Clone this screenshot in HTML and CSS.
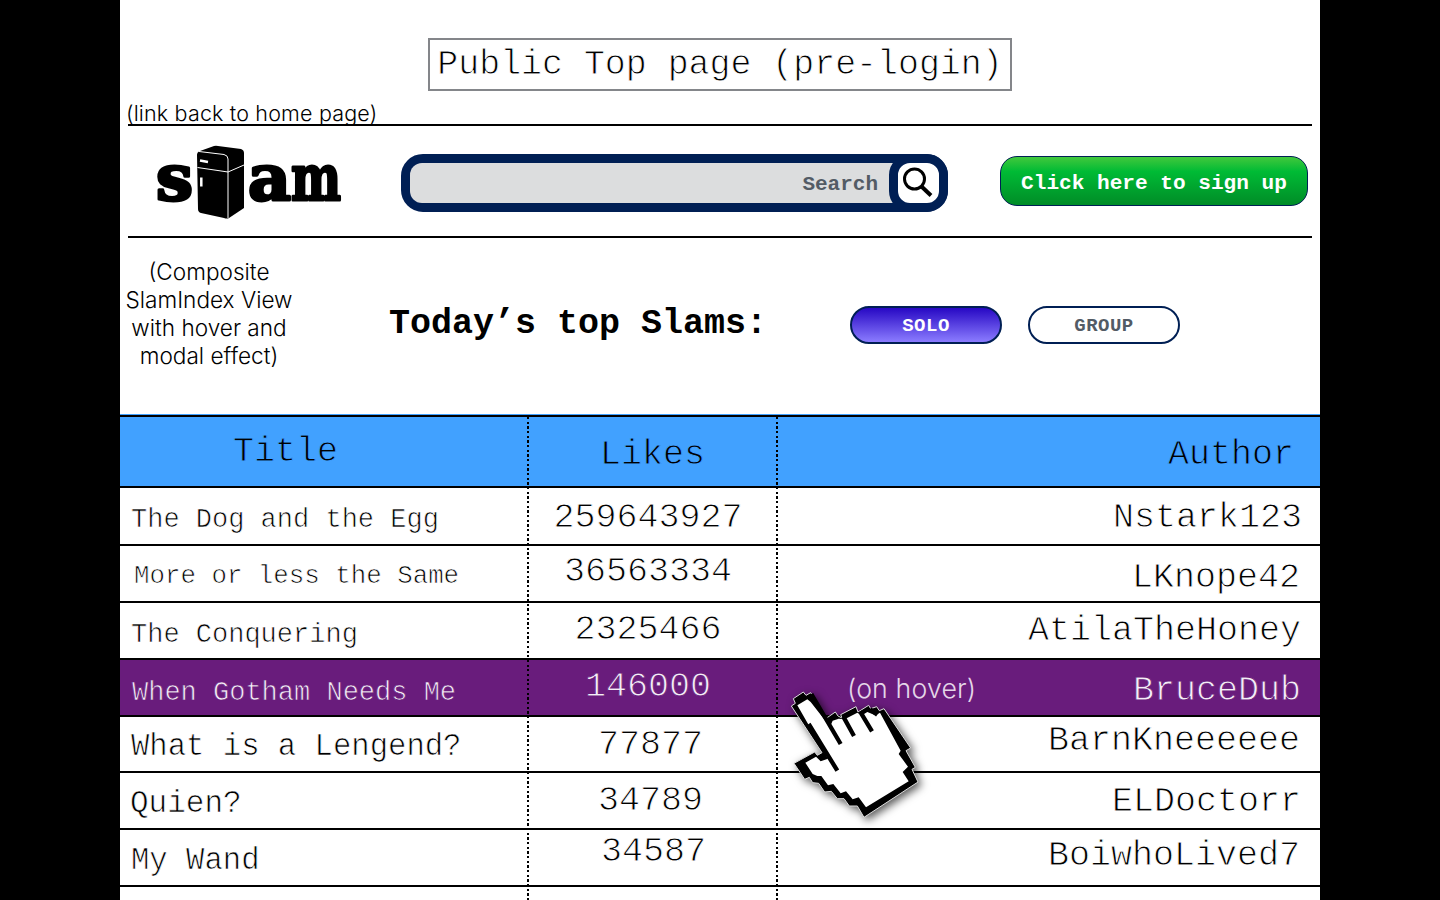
FILE: index.html
```html
<!DOCTYPE html>
<html lang="en">
<head>
<meta charset="utf-8">
<title>Slam</title>
<link rel="stylesheet" href="styles.css">
</head>
<body>
<main class="page">
  <h1 class="page-title">Public Top page (pre-login)</h1>
  <p class="note note-home">(link back to home page)</p>
  <header class="bar">
    <svg class="logo" width="190" height="80" viewBox="0 0 190 80" role="img" aria-label="slam">
      <g class="logo-text">
        <text x="2" y="57.500" textLength="37" lengthAdjust="spacingAndGlyphs">s</text>
        <text x="94" y="57.500" textLength="43" lengthAdjust="spacingAndGlyphs">a</text>
        <text x="137" y="57.500" textLength="50" lengthAdjust="spacingAndGlyphs">m</text>
      </g>
      <path d="M43 13Q43 10 46 9L60 4Q62 3.500 64 4L87 7Q90 8 90 11V66L75 76Q73 77 70 76L47 71Q44 70 44 67Z" fill="#000"/>
      <path d="M45 9.500L70 12.500Q74 13.500 74 17V76M43.500 25.500L74 30L90 23" fill="none" stroke="#fff" stroke-width="1"/>
      <path d="M46 18.500L54 20M47.300 35.500V44.500" fill="none" stroke="#fff" stroke-width="2.500"/>
    </svg>
    <div class="search">
      <span class="search-field">Search</span>
      <span class="search-button">
        <svg width="41" height="40" viewBox="0 0 41 40"><circle cx="16.500" cy="16" r="10" fill="none" stroke="#000" stroke-width="3"/><path d="M23.500 23.500L33 32.500" stroke="#000" stroke-width="4"/></svg>
      </span>
    </div>
    <button class="signup">Click here to sign up</button>
  </header>
  <section class="filter">
    <p class="note note-view">(Composite<br>SlamIndex View<br>with hover and<br>modal effect)</p>
    <h2 class="heading">Today’s top Slams:</h2>
    <button class="pill pill-solo">SOLO</button>
    <button class="pill pill-group">GROUP</button>
  </section>
  <section class="table">
    <div class="row row-head"><span class="title">Title</span><span class="likes">Likes</span><span class="author">Author</span></div>
    <div class="row row-1"><span class="title">The Dog and the Egg</span><span class="likes">259643927</span><span class="author">Nstark123</span></div>
    <div class="row row-2"><span class="title">More or less the Same</span><span class="likes">36563334</span><span class="author">LKnope42</span></div>
    <div class="row row-3"><span class="title">The Conquering</span><span class="likes">2325466</span><span class="author">AtilaTheHoney</span></div>
    <div class="row row-4"><span class="title">When Gotham Needs Me</span><span class="likes">146000</span><span class="author"><span class="note note-hover">(on hover)</span>BruceDub</span></div>
    <div class="row row-5"><span class="title">What is a Lengend?</span><span class="likes">77877</span><span class="author">BarnKneeeeee</span></div>
    <div class="row row-6"><span class="title">Quien?</span><span class="likes">34789</span><span class="author">ELDoctorr</span></div>
    <div class="row row-7"><span class="title">My Wand</span><span class="likes">34587</span><span class="author">BoiwhoLived7</span></div>
    <div class="row row-8"></div>
  </section>
  <svg class="cursor" width="160" height="150" viewBox="0 0 480 450">
    <path d="M34 78L46 70L40 56L70 36L78 46L92 38L140 114L166 96L174 108L186 114L182 104L228 80L234 96L266 76L272 86L290 80L298 92L312 86L392 204L378 212L406 262L396 268L414 306L252 412L232 378L208 378L192 356L172 356L154 334L134 336L116 310L98 308L88 292L74 298L42 250L104 216L112 226L126 218Z" fill="#000" stroke="#ddd" stroke-width="3"/>
    <path d="M52 76L82 58L92 66L150 140L158 122L176 116L194 118L232 98L246 106L262 96L286 106L300 98L362 212L356 222L384 260L368 276L386 304L258 382L236 352L218 358L198 334L182 340L160 312L144 316L124 288L112 288L98 282L76 248L108 230L122 244L144 236Z" fill="#fff"/>
    <path d="M86 132L172 272M94 42L182 192M190 110L222 168M240 94L276 154M270 88L292 104" fill="none" stroke="#000" stroke-width="13"/>
  </svg>
</main>
</body>
</html>
```
FILE: styles.css
```css
* { box-sizing: border-box; }
body { margin: 0; height: 900px; overflow: hidden; background: #000; }
.page {
  --paper: #fff;
  position: relative; display: flex; flex-direction: column;
  width: 1200px; height: 900px; margin: 0 auto; overflow: hidden;
  background: #fff; color: #000;
  font-family: "Liberation Mono", monospace;
}
h1, h2, p { margin: 0; }
button { padding: 0; font-family: "Liberation Mono", monospace; font-weight: bold; }
.page-title {
  align-self: center; flex: none; width: 584px; height: 53px; margin-top: 38px;
  border: 2px solid #84868a; text-align: center; white-space: nowrap;
  font-size: 34.900px; font-weight: normal; line-height: 49px;
}
/* A thin outline in the background colour gives the text a lighter weight */
.page-title, .row { -webkit-text-stroke: .9px var(--paper); }
.note { font-family: Inter, "Liberation Sans", sans-serif; font-weight: 300; -webkit-text-stroke: 0; }
.note-home { height: 33px; padding: 8px 0 0 6px; font-size: 21.500px; line-height: 28px; letter-spacing: .17px; }
.bar {
  display: flex; flex: none; align-items: flex-start; height: 114px; margin: 0 8px;
  border-top: 2px solid #000; border-bottom: 2px solid #000;
}
.logo { flex: none; margin: 16px 0 0 26px; overflow: visible; }
.logo-text { font-family: "DejaVu Serif", serif; font-size: 63px; font-weight: bold; stroke: #000; stroke-width: 3px; stroke-linejoin: round; }
.search {
  display: flex; flex: none; width: 547px; height: 58px; margin: 28px 0 0 57px;
  border: 9px solid #001f54; border-radius: 22px; background: #001f54;
}
.search-field {
  flex: none; width: 486px; height: 40px; padding-right: 18px; border-radius: 12px 0 0 12px;
  background: #dcddde; color: #535b65; text-align: right; font-size: 21px; font-weight: bold; line-height: 44px;
}
.search-button { flex: none; width: 59px; height: 58px; margin: -9px 0 0 -7px; border: 9px solid #001f54; border-radius: 21px; background: #fff; }
.search-button svg { display: block; }
.signup {
  flex: none; width: 308px; height: 50px; margin: 30px 0 0 52px;
  border: 1px solid #001f54; border-radius: 17px; color: #fff; font-size: 21.100px; line-height: 48px;
  padding-top: 2px;
  background: linear-gradient(#42c83c, #00bb35 30%, #008c27);
}
.filter { display: flex; flex: none; align-items: flex-start; height: 176px; }
.note-view { width: 178px; padding-top: 20px; text-align: center; font-size: 22.600px; line-height: 28px; letter-spacing: 0; }
.heading { width: 382px; margin-left: 91px; padding-top: 66px; font-size: 35px; line-height: 40px; white-space: nowrap; }
.pill { flex: none; width: 152px; height: 38px; margin-top: 68px; padding-top: 2px; border: 2px solid #001f54; border-radius: 19px; font-size: 19px; line-height: 32px; letter-spacing: .5px; }
.pill-solo { margin-left: 79px; color: #fff; background: linear-gradient(#2708c4, #8b7cff); }
.pill-group { margin-left: 26px; color: #535b65; background: #fff; }
.table { position: relative; flex: none; height: 486px; border-top: 1px solid #41a1ff; overflow: hidden; }
.table::before, .table::after {
  content: ""; position: absolute; top: 2px; bottom: 0; width: 2px;
  background: repeating-linear-gradient(#000 0 2.300px, transparent 2.300px 4.670px);
}
.table::before { left: 407px; }
.table::after { left: 656px; }
.row {
  display: grid; grid-template-columns: 409px 249px 1fr; height: 57px;
  border-bottom: 2px solid #000; font-size: 35px; line-height: 40px; white-space: nowrap;
}
.title { padding-left: 11px; font-size: 27px; -webkit-text-stroke-width: .7px; }
.likes { padding-right: 11px; text-align: center; }
.author { padding-right: 18px; text-align: right; }
.row-head { --paper: #41a1ff; height: 73px; border-top: 2px solid #000; background: #41a1ff; }
.row-head .title { padding: 15px 0 0 113px; font-size: 35px; -webkit-text-stroke-width: .9px; }
.row-head .likes { padding: 18px 2px 0 0; }
.row-head .author { padding: 18px 26px 0 0; }
.row-1 { height: 58px; }
.row-1 .title { padding-top: 12px; }
.row-1 .likes, .row-1 .author { padding-top: 10px; }
.row-2 .title { padding: 11px 0 0 14px; font-size: 25.800px; }
.row-2 .likes { padding-top: 6px; }
.row-2 .author { padding: 12px 20px 0 0; }
.row-3 .title { padding-top: 12px; }
.row-3 .likes { padding-top: 7px; }
.row-3 .author { padding: 8px 19px 0 0; }
.row-4 { --paper: #691c7c; background: #691c7c; color: #f5edf7; }
.row-4 .title { padding: 13px 0 0 12px; }
.row-4 .likes { padding-top: 7px; }
.row-4 .author { display: flex; justify-content: space-between; padding: 11px 19px 0 70px; }
.note-hover { margin: -3px 0 0 -1px; font-size: 26.700px; letter-spacing: .15px; color: #e4d6e8; }
.row-5 { height: 56px; }
.row-5 .title { padding-top: 10px; font-size: 30.600px; }
.row-5 .likes { padding: 8px 6px 0 0; }
.row-5 .author { padding: 4px 20px 0 0; }
.row-6 .title { padding: 11px 0 0 10px; font-size: 31px; }
.row-6 .likes { padding: 8px 6px 0 0; }
.row-6 .author { padding: 9px 19px 0 0; }
.row-7 .title { padding-top: 11px; font-size: 30.600px; }
.row-7 .likes { padding: 2px 0 0; }
.row-7 .author { padding: 6px 20px 0 0; }
.cursor { position: absolute; left: 660px; top: 680px; filter: drop-shadow(3px 3px 4px rgba(0, 0, 0, .65)); }
```
